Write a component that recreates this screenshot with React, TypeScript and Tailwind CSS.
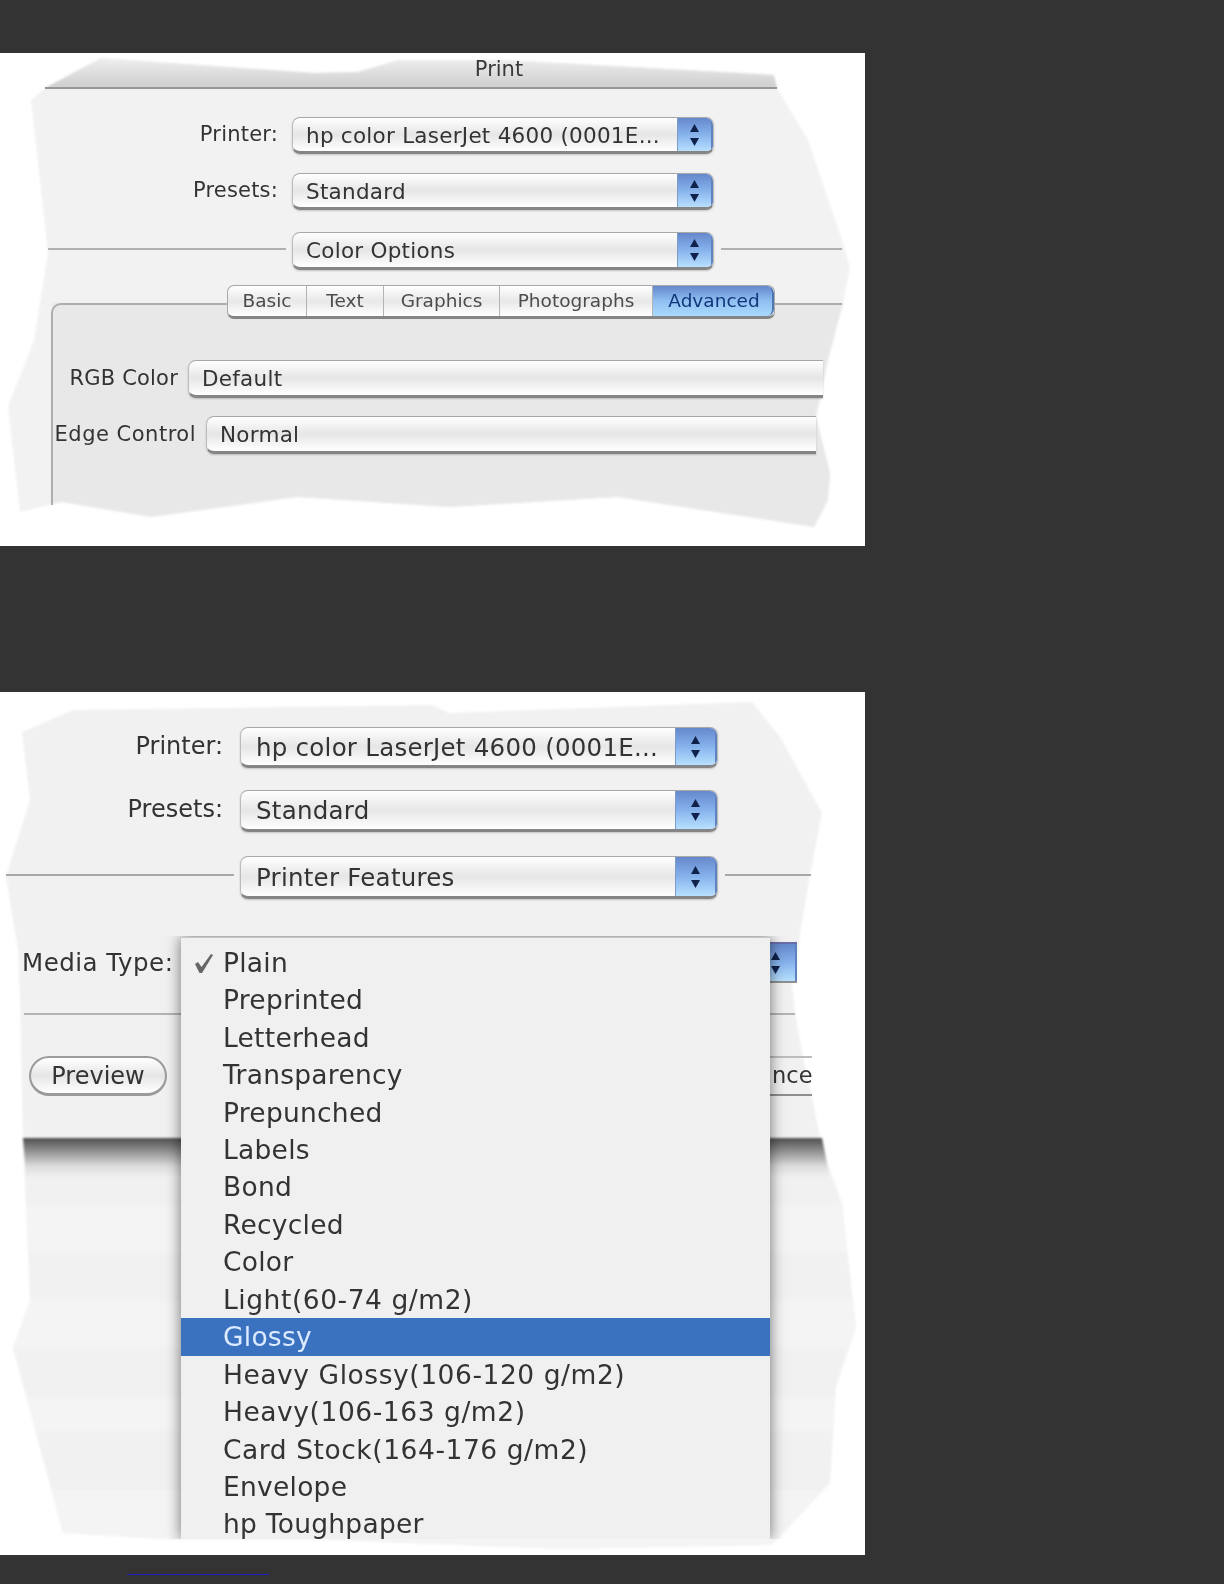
import React from "react";

const FONT = "font-['DejaVu_Sans',sans-serif]";

function Arrows() {
  return (
    <svg width="11" height="24" viewBox="0 0 11 24" className="block">
      <path d="M5.5 1 L10 9 L1 9 Z" fill="#10224c" />
      <path d="M5.5 23 L10 15 L1 15 Z" fill="#10224c" />
    </svg>
  );
}

function Stepper({ w }: { w: string }) {
  return (
    <div
      className={`${w} shrink-0 self-stretch flex items-center justify-center bg-gradient-to-b from-[#6688cc] via-[#86b2ec] to-[#b8e0fe] border-l border-l-[#7e9cc8] border-r-2 border-r-[#5f83c0]`}
    >
      <Arrows />
    </div>
  );
}

const FIELD =
  "border border-t-[#a8a8a8] border-x-[#bcbcbc] border-b-[3px] border-b-[#858585] bg-gradient-to-b from-[#ffffff] via-[#e6e6e6] to-[#ffffff] shadow-[0_1px_2px_rgba(0,0,0,0.2)]";

function Select({
  text,
  cls,
  txt,
  stepper,
}: {
  text: string;
  cls: string;
  txt: string;
  stepper?: string;
}) {
  return (
    <div className={`${cls} ${FIELD} flex items-stretch rounded-[8px] overflow-hidden`}>
      <div className={`flex-1 flex items-center ${txt} whitespace-nowrap overflow-hidden`}>{text}</div>
      {stepper ? <Stepper w={stepper} /> : null}
    </div>
  );
}

function Tab({ label, w, active }: { label: string; w: string; active?: boolean }) {
  return (
    <div
      className={`${w} h-full flex items-center justify-center text-[18.5px] ${
        active
          ? "bg-gradient-to-b from-[#6688cc] via-[#8fc0f2] to-[#a9dafd] text-[#12367a] rounded-r-[7px] border-r-2 border-[#4f76b4] pl-[3px]"
          : "border-r border-[#b4b4b4] text-[#4c4c4c]"
      }`}
    >
      {label}
    </div>
  );
}

const MENU = [
  "Plain",
  "Preprinted",
  "Letterhead",
  "Transparency",
  "Prepunched",
  "Labels",
  "Bond",
  "Recycled",
  "Color",
  "Light(60-74 g/m2)",
  "Glossy",
  "Heavy Glossy(106-120 g/m2)",
  "Heavy(106-163 g/m2)",
  "Card Stock(164-176 g/m2)",
  "Envelope",
  "hp Toughpaper",
];

const ONE_BODY =
  "45,88 101,58 314,73 358,72 398,60 505,60 774,75 777,88 808,140 842,240 850,267 842,307 828,360 816,417 830,473 828,500 814,527 617,497 449,507 297,497 151,517 62,502 20,512 8,407 34,340 48,253 31,100";

const TWO_BODY =
  "22,732 73,710 432,705 449,713 752,702 780,737 822,813 810,875 800,933 797,967 792,983 795,1013 803,1057 812,1097 822,1148 842,1203 856,1327 836,1387 830,1483 772,1545 561,1549 330,1540 180,1540 63,1533 13,1348 30,1300 23,1138 20,1000 18,950 6,876 30,800";

function PanelOne() {
  const s = "pl-[13px] pt-[3px] text-[21.5px] tracking-[0.25px] text-[#333]";
  const l = "text-right text-[21px] tracking-[0.2px] text-[#333] whitespace-nowrap";
  const line = "h-[2px] bg-[#b0b0b0]";
  return (
    <section className="relative w-[865px] h-[493px] bg-white overflow-hidden">
      <svg className="absolute inset-0 blur-[1px]" width="865" height="493" viewBox="0 53 865 493">
        <defs>
          <linearGradient id="tt" x1="0" y1="0" x2="0" y2="1">
            <stop offset="0" stopColor="#efefef" />
            <stop offset="1" stopColor="#cdcdcd" />
          </linearGradient>
        </defs>
        <polygon points={ONE_BODY} fill="#f2f2f2" />
        <polygon
          points="45,88 101,58 314,73 358,72 398,60 505,60 774,75 777,88"
          fill="url(#tt)"
        />
        <polygon
          points="52,303 844,303 842,307 828,360 816,417 830,473 828,500 814,527 617,497 449,507 297,497 151,517 62,502 52,504"
          fill="#e8e8e8"
        />
      </svg>
      <div className={`relative ${FONT} blur-[0.5px]`}>
        <header className="ml-[45px] w-[732px] h-[36px] border-b-2 border-[#969696] flex items-center justify-center pl-[176px] pb-[1px] text-[21px] text-[#3a3a3a]">
          Print
        </header>
        <div className="mt-[28px] flex items-center">
          <label className={`w-[278px] ${l} -mt-[2px]`}>Printer:</label>
          <Select
            text="hp color LaserJet 4600 (0001E..."
            cls="ml-[14px] w-[422px] h-[37px]"
            txt={s}
            stepper="w-[36px]"
          />
        </div>
        <div className="mt-[19px] flex items-center">
          <label className={`w-[278px] ${l} -mt-[2px]`}>Presets:</label>
          <Select text="Standard" cls="ml-[14px] w-[422px] h-[37px]" txt={s} stepper="w-[36px]" />
        </div>
        <div className="mt-[22px] flex items-center">
          <div className={`ml-[48px] w-[238px] ${line} -mt-[5px]`} />
          <Select text="Color Options" cls="ml-[6px] w-[422px] h-[38px]" txt={s} stepper="w-[36px]" />
          <div className={`ml-[7px] w-[121px] ${line} -mt-[5px]`} />
        </div>
        <div className="relative mt-[33px] ml-[51px] w-[791px] h-[202px] border-t-2 border-l-2 border-[#adadad] rounded-tl-[10px] [border-bottom:0] pt-[55px]">
          <div className="absolute left-[174px] top-[-20px] w-[548px] h-[34px] flex rounded-[7px] overflow-hidden border border-[#a8a8a8] border-b-[3px] border-b-[#858585] bg-gradient-to-b from-[#ffffff] via-[#e8e8e8] to-[#ffffff]">
            <Tab label="Basic" w="w-[79px]" />
            <Tab label="Text" w="w-[77px]" />
            <Tab label="Graphics" w="w-[116px]" />
            <Tab label="Photographs" w="w-[153px]" />
            <Tab label="Advanced" w="w-[121px]" active />
          </div>
          <div className="flex items-center">
            <label className={`w-[125px] ${l}`}>RGB Color</label>
            <div className={`ml-[10px] w-[635px] h-[38px] flex items-stretch rounded-l-[8px] ${FIELD} border-r-0`}>
              <div className={`flex items-center ${s}`}>Default</div>
            </div>
          </div>
          <div className="mt-[18px] flex items-center">
            <label className={`w-[143px] ${l} tracking-[0.5px]`}>Edge Control</label>
            <div className={`ml-[10px] w-[610px] h-[38px] flex items-stretch rounded-l-[8px] ${FIELD} border-r-0`}>
              <div className={`flex items-center ${s}`}>Normal</div>
            </div>
          </div>
        </div>
      </div>
    </section>
  );
}

function PanelTwo() {
  const s = "pl-[15px] pt-[3px] text-[24.5px] tracking-[0.25px] text-[#333]";
  const l = "text-right text-[24px] text-[#333] whitespace-nowrap";
  const line = "h-[2px] bg-[#a8a8a8]";
  return (
    <section className="relative mt-[146px] w-[865px] h-[863px] bg-white overflow-hidden">
      <svg className="absolute inset-0 blur-[1px]" width="865" height="863" viewBox="0 692 865 863">
        <defs>
          <linearGradient id="band" x1="0" y1="0" x2="0" y2="1">
            <stop offset="0" stopColor="#505050" />
            <stop offset="0.3" stopColor="#8c8c8c" />
            <stop offset="0.7" stopColor="#dcdcdc" />
            <stop offset="1" stopColor="#f2f2f2" />
          </linearGradient>
          <clipPath id="sheet">
            <polygon points={TWO_BODY} />
          </clipPath>
        </defs>
        <polygon points={TWO_BODY} fill="#f1f1f1" />
        <g clipPath="url(#sheet)" fill="#f4f4f4">
          <rect x="0" y="1205" width="865" height="48" />
          <rect x="0" y="1300" width="865" height="48" />
          <rect x="0" y="1397" width="865" height="34" />
          <rect x="0" y="1490" width="865" height="60" />
        </g>
        <polygon points="23,1138 822,1138 830,1178 26,1178" fill="url(#band)" />
      </svg>
      <div className={`relative ${FONT} blur-[0.5px]`}>
        <div className="pt-[35px] flex items-center">
          <label className={`w-[223px] ${l} -mt-[4px]`}>Printer:</label>
          <Select
            text="hp color LaserJet 4600 (0001E..."
            cls="ml-[17px] w-[478px] h-[41px]"
            txt={s}
            stepper="w-[42px]"
          />
        </div>
        <div className="mt-[22px] flex items-center">
          <label className={`w-[223px] ${l} -mt-[4px]`}>Presets:</label>
          <Select text="Standard" cls="ml-[17px] w-[478px] h-[42px]" txt={s} stepper="w-[42px]" />
        </div>
        <div className="mt-[24px] flex items-center">
          <div className={`ml-[6px] w-[228px] ${line} -mt-[6px]`} />
          <Select text="Printer Features" cls="ml-[6px] w-[478px] h-[43px]" txt={s} stepper="w-[42px]" />
          <div className={`ml-[7px] w-[86px] ${line} -mt-[6px]`} />
        </div>
        <div className="mt-[43px] h-[41px] flex items-center">
          <label className="ml-[22px] w-[150px] pt-[2px] text-[24.5px] tracking-[0.5px] text-[#333] whitespace-nowrap">
            Media Type:
          </label>
          <div className="ml-[9px] w-[616px] h-full flex rounded-l-[7px] overflow-hidden border-t-2 border-t-[#6a6ea8] border-b-2 border-b-[#8f8f8f] bg-[#e9e9e9]">
            <div className="flex-1" />
            <Stepper w="w-[42px]" />
          </div>
        </div>
        <div className="mt-[30px] ml-[24px] w-[771px] h-[2px] bg-[#b4b4b4]" />
        <div className="mt-[41px] h-[40px] flex">
          <button className="ml-[29px] w-[138px] h-full rounded-full border-2 border-[#9b9b9b] border-b-[3px] bg-gradient-to-b from-[#ffffff] via-[#e6e6e6] to-[#ffffff] text-[24px] text-[#333]">
            Preview
          </button>
          <div className="ml-[603px] w-[42px] h-full border-t-2 border-t-[#bdbdbd] border-b-2 border-b-[#8f8f8f] overflow-hidden flex items-center text-[22.5px] text-[#333]">
            <span className="ml-[2px]">nce</span>
          </div>
        </div>
      </div>
      <div
        className={`absolute left-[181px] top-[245px] w-[589px] h-[602px] bg-[#f0f0f0] border-t border-[#c6c6c6] pt-[6px] shadow-[0_0_14px_rgba(0,0,0,0.55)] [clip-path:inset(-1px_-20px_0_-20px)] ${FONT}`}
      >
        <div className="blur-[0.5px]">
          {MENU.map((m) => (
            <div
              key={m}
              className={`relative h-[37.45px] flex items-center pl-[42px] text-[26.5px] whitespace-nowrap ${
                m.includes("(") ? "tracking-[0.55px]" : "tracking-[0.25px]"
              } ${m === "Glossy" ? "bg-[#3a72c0] text-[#dcebff]" : "text-[#333]"}`}
            >
              {m === "Plain" ? (
                <svg
                  className="absolute left-[12px] top-[8px]"
                  width="22"
                  height="22"
                  viewBox="0 0 22 22"
                >
                  <path d="M2 12 L5 10 L8.5 15 L18 2 L20 3 L9 21 L6.5 21 Z" fill="#666" />
                </svg>
              ) : null}
              {m}
            </div>
          ))}
        </div>
      </div>
    </section>
  );
}

export default function App() {
  return (
    <main className="w-[1224px] h-[1584px] bg-[#333333] pt-[53px] overflow-hidden">
      <PanelOne />
      <PanelTwo />
      <div className="mt-[19px] ml-[127px] w-[142px] h-px bg-[#1f1fc4]" />
    </main>
  );
}
